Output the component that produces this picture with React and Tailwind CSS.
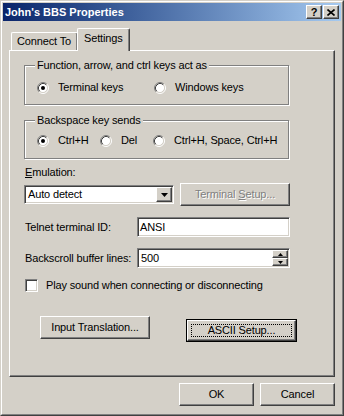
import React from "react";

const raised =
  "bg-[#d4d0c8] border border-t-white border-l-white border-r-[#404040] border-b-[#404040] shadow-[inset_-1px_-1px_0_#808080]";
const sunken =
  "bg-white border border-t-[#808080] border-l-[#808080] border-r-white border-b-white shadow-[inset_1px_1px_0_#404040,inset_-1px_-1px_0_#d4d0c8]";
const etched =
  "relative border border-[#808080] shadow-[inset_1px_1px_0_#fff,1px_1px_0_#fff]";

function Radio({ checked }) {
  return (
    <svg width="12" height="12" viewBox="0 0 12 12" className="shrink-0">
      <circle cx="6" cy="6" r="4.5" fill="#fff" />
      <path d="M9.89 2.11A5.5 5.5 0 0 0 2.11 9.89" stroke="#808080" fill="none" />
      <path d="M2.11 9.89A5.5 5.5 0 0 0 9.89 2.11" stroke="#fff" fill="none" />
      <path d="M9.18 2.82A4.5 4.5 0 0 0 2.82 9.18" stroke="#404040" fill="none" />
      <path d="M2.82 9.18A4.5 4.5 0 0 0 9.18 2.82" stroke="#d4d0c8" fill="none" />
      {checked && <circle cx="6" cy="6" r="2" fill="#000" />}
    </svg>
  );
}

function RadioItem({ checked, label, w }) {
  return (
    <div className={`flex items-center gap-[9px] ${w}`}>
      <Radio checked={checked} />
      <span className="leading-[13px]">{label}</span>
    </div>
  );
}

function GroupBox({ title, h, pt, children }) {
  return (
    <div className={`${etched} w-[265px] ${h}`}>
      <span className="absolute left-[10px] -top-[7px] bg-[#d4d0c8] px-[2px] leading-[13px]">
        {title}
      </span>
      <div className={`flex pl-[12px] ${pt}`}>{children}</div>
    </div>
  );
}

function Arrow({ up }) {
  return (
    <svg width="5" height="3" viewBox="0 0 5 3">
      <path d={up ? "M2.5 0L5 3H0z" : "M0 0h5L2.5 3z"} fill="#000" />
    </svg>
  );
}

export default function App() {
  return (
    <div className="w-[344px] h-[416px] bg-[#d4d0c8] text-[11px] text-black font-['Liberation_Sans',Arial,sans-serif] select-none">
      <div className="h-full border border-t-[#d4d0c8] border-l-[#d4d0c8] border-r-[#404040] border-b-[#404040]">
        <div className="h-full border border-t-white border-l-white border-r-[#808080] border-b-[#808080] p-px">
          {/* title bar */}
          <div className="h-[18px] flex items-center bg-gradient-to-r from-[#0a246a] to-[#a6caf0] pl-[2px] pr-[2px]">
            <span className="flex-1 text-white font-bold leading-[13px]">John's BBS Properties</span>
            <div className="flex gap-[1px]">
              <div className={`${raised} w-[16px] h-[14px] flex items-center justify-center font-bold text-[11px] leading-none`}>
                ?
              </div>
              <div className={`${raised} w-[16px] h-[14px] flex items-center justify-center`}>
                <svg width="8" height="7" viewBox="0 0 8 7">
                  <path d="M0.5 0.5L7.5 6.5M7.5 0.5L0.5 6.5" stroke="#000" strokeWidth="1.6" />
                </svg>
              </div>
            </div>
          </div>

          <div className="px-[6px] pt-[7px] tracking-[-0.15px]">
            {/* tabs */}
            <div className="flex items-end h-[22px] pl-[2px]">
              <div className="h-[18px] w-[67px] border-t border-l border-t-white border-l-white border-r border-r-[#404040] shadow-[inset_-1px_0_0_#808080] rounded-t-[2px] flex items-start pl-[5px] pt-[2px] leading-[13px]">
                Connect To
              </div>
              <div className="relative z-10 -mb-px h-[23px] w-[53px] -ml-[1px] bg-[#d4d0c8] border-t border-l border-t-white border-l-white border-r border-r-[#404040] shadow-[inset_-1px_0_0_#808080] rounded-t-[2px] pl-[6px] pt-[3px] leading-[13px]">
                Settings
              </div>
            </div>

            {/* panel */}
            <div className="w-[326px] h-[327px] border border-t-white border-l-white border-r-[#404040] border-b-[#404040] shadow-[inset_-1px_-1px_0_#808080] pl-[14px] pt-[14px]">
              <GroupBox title="Function, arrow, and ctrl keys act as" h="h-[40px]" pt="pt-[15px]">
                <RadioItem checked label="Terminal keys" w="w-[117px]" />
                <RadioItem label="Windows keys" />
              </GroupBox>

              <div className="mt-[15px]">
                <GroupBox title="Backspace key sends" h="h-[39px]" pt="pt-[13px]">
                  <RadioItem checked label="Ctrl+H" w="w-[63px]" />
                  <RadioItem label="Del" w="w-[53px]" />
                  <RadioItem label="Ctrl+H, Space, Ctrl+H" />
                </GroupBox>
              </div>

              <div className="mt-[7px] pl-px leading-[13px]">
                <span className="underline">E</span>mulation:
              </div>

              <div className="mt-[4px] flex items-center gap-[6px]">
                <div className={`${sunken} w-[150px] h-[19px] flex items-center justify-between pl-[3px] pr-[1px]`}>
                  <span className="leading-[13px]">Auto detect</span>
                  <div className={`${raised} w-[16px] h-[15px] flex items-center justify-center`}>
                    <svg width="7" height="4" viewBox="0 0 7 4">
                      <path d="M0 0h7L3.5 4z" fill="#000" />
                    </svg>
                  </div>
                </div>
                <div className={`${raised} w-[110px] h-[23px] flex items-center justify-center text-[#808080] [text-shadow:1px_1px_0_#fff]`}>
                  Terminal <span className="underline ml-[3px]">S</span>etup...
                </div>
              </div>

              <div className="mt-[11px] flex items-center">
                <span className="w-[113px] pl-px leading-[13px]">Telnet terminal ID:</span>
                <div className={`${sunken} w-[153px] h-[20px] flex items-center pl-[2px] leading-[13px]`}>ANSI</div>
              </div>

              <div className="mt-[11px] flex items-center">
                <span className="w-[113px] pl-px leading-[13px]">Backscroll buffer lines:</span>
                <div className={`${sunken} w-[153px] h-[20px] flex items-center justify-between pl-[3px] pr-[1px] py-[1px]`}>
                  <span className="leading-[13px]">500</span>
                  <div className="flex flex-col h-full w-[16px]">
                    <div className={`${raised} flex-1 flex items-center justify-center`}>
                      <Arrow up />
                    </div>
                    <div className={`${raised} flex-1 flex items-center justify-center`}>
                      <Arrow />
                    </div>
                  </div>
                </div>
              </div>

              <div className="mt-[11px] flex items-center gap-[8px] pl-px">
                <div className={`${sunken} w-[13px] h-[13px]`} />
                <span className="leading-[13px]">Play sound when connecting or disconnecting</span>
              </div>

              <div className="mt-[24px] flex items-start pl-[16px] gap-[36px]">
                <div className={`${raised} w-[110px] h-[23px] flex items-center justify-center`}>Input Translation...</div>
                <div className="mt-[3px] w-[111px] h-[23px] border border-black">
                  <div className={`${raised} h-full p-[3px]`}>
                    <div className="h-full border border-dotted border-black flex items-center justify-center">ASCII Setup...</div>
                  </div>
                </div>
              </div>
            </div>

            {/* dialog buttons */}
            <div className="mt-[6px] flex justify-end gap-[6px]">
              <div className={`${raised} w-[75px] h-[23px] flex items-center justify-center`}>OK</div>
              <div className={`${raised} w-[75px] h-[23px] flex items-center justify-center`}>Cancel</div>
            </div>
          </div>
        </div>
      </div>
    </div>
  );
}
